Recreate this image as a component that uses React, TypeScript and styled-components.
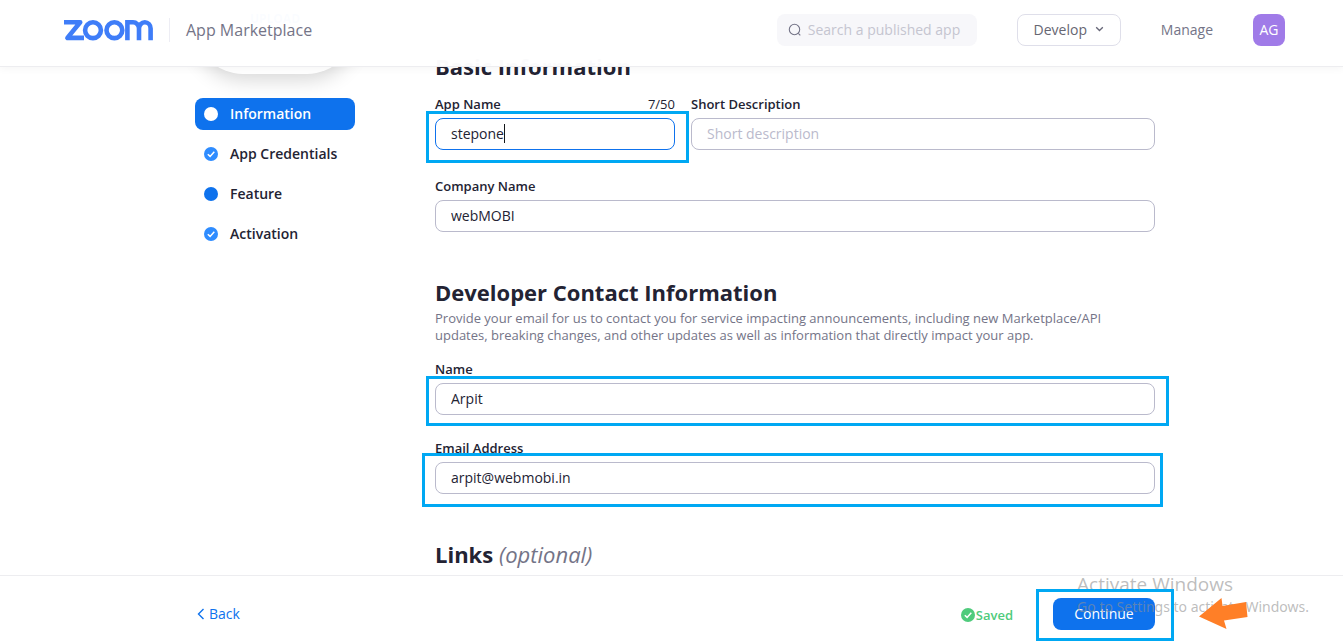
import React from "react";
import styled, { createGlobalStyle, css } from "styled-components";

const GlobalStyle = createGlobalStyle`
  *, *::before, *::after { box-sizing: border-box; }
  body {
    margin: 0;
    background: #fff;
    color: #232333;
    font-family: "Open Sans", "Noto Sans", sans-serif;
    font-size: 14px;
    line-height: 20px;
  }
  button, input { font: inherit; }
  h2, p { margin: 0; }
`;

const Shell = styled.div`
  display: flex;
  flex-direction: column;
  height: 100vh;
  overflow: hidden;
`;

const Header = styled.header`
  position: relative;
  z-index: 2;
  flex: none;
  display: flex;
  align-items: center;
  height: 67px;
  padding: 0 58px 7px 64px;
  background: rgba(255, 255, 255, 0.98);
  border-bottom: 1px solid #ededf0;
  box-shadow: 0 2px 8px rgba(0, 0, 0, 0.04);
`;

const Brand = styled.a`
  display: flex;
  align-items: center;
  gap: 16px;
  color: #747487;
  font-size: 16px;
  text-decoration: none;
`;

const BrandName = styled.span`
  padding: 2px 0 2px 16px;
  border-left: 1px solid #ededf4;
`;

const HeaderActions = styled.div`
  display: flex;
  align-items: center;
  gap: 40px;
  margin-left: auto;
`;

const SearchBox = styled.label`
  display: flex;
  align-items: center;
  gap: 5px;
  width: 200px;
  height: 32px;
  padding: 0 10px;
  border-radius: 8px;
  background: #f7f7fa;
`;

const SearchInput = styled.input`
  flex: 1;
  min-width: 0;
  padding: 0;
  border: 0;
  outline: 0;
  background: transparent;
  &::placeholder { color: #c5c5d0; opacity: 1; }
`;

const DevelopButton = styled.button`
  display: flex;
  align-items: center;
  justify-content: center;
  gap: 8px;
  width: 104px;
  height: 32px;
  padding: 0;
  border: 1px solid #dfdfea;
  border-radius: 8px;
  background: #fff;
  color: #666672;
`;

const HeaderLink = styled.a`
  color: #747487;
  text-decoration: none;
`;

const Avatar = styled.button`
  width: 32px;
  height: 32px;
  padding: 0;
  border: 0;
  border-radius: 8px;
  background: #a07be8;
  color: #fff;
`;

const Main = styled.main`
  flex: 1;
  min-height: 0;
  display: flex;
  gap: 80px;
  margin-top: -67px;
  padding: 0 188px 0 195px;
  overflow: hidden;
`;

const Sidebar = styled.aside`
  flex: none;
  width: 160px;
`;

const LogoCard = styled.div`
  height: 74px;
  padding-top: 8px;
  border-radius: 0 0 48px 48px;
  box-shadow: 0 6px 20px rgba(0, 0, 0, 0.16);
  text-align: center;
`;

const UploadButton = styled.button`
  padding: 0;
  border: 0;
  background: transparent;
  color: #0e72ed;
  font-size: 12px;
  font-weight: 700;
`;

const StepList = styled.nav`
  display: flex;
  flex-direction: column;
  gap: 8px;
  margin-top: 24px;
`;

const Step = styled.a<{ $active?: boolean }>`
  display: flex;
  align-items: center;
  gap: 12px;
  height: 32px;
  padding: 0 9px;
  border-radius: 8px;
  font-weight: 600;
  color: #232333;
  text-decoration: none;
  ${(p) =>
    p.$active &&
    css`
      background: #0e72ed;
      color: #fff;
    `}
`;

const Form = styled.form`
  flex: 1;
  min-width: 0;
  display: flex;
  flex-direction: column;
  gap: 45px;
  padding-top: 51px;
`;

const Section = styled.section`
  display: flex;
  flex-direction: column;
`;

const SectionTitle = styled.h2`
  font-size: 22px;
  line-height: 30px;
  font-weight: 700;
`;

const Optional = styled.em`
  font-weight: 400;
  color: #747487;
`;

const Intro = styled.p`
  margin-top: 3px;
  max-width: 700px;
  color: #747487;
  font-size: 13px;
  line-height: 17px;
`;

const Fields = styled.div<{ $top: number; $gap: number }>`
  display: grid;
  gap: ${(p) => p.$gap}px;
  margin-top: ${(p) => p.$top}px;
`;

const FieldRow = styled.div`
  display: grid;
  grid-template-columns: 240px 1fr;
  gap: 16px;
`;

const FieldBox = styled.div`
  position: relative;
  min-width: 0;
`;

const FieldHead = styled.div`
  display: flex;
  justify-content: space-between;
  margin-bottom: 4px;
  font-size: 13px;
`;

const FieldLabel = styled.label`
  font-weight: 600;
`;

const TextInput = styled.input<{ $focused?: boolean }>`
  display: block;
  width: 100%;
  height: 32px;
  padding: 0 15px 2px;
  border: 1px solid ${(p) => (p.$focused ? "#0e72ed" : "#babacc")};
  border-radius: 8px;
  outline: 0;
  background: #fff;
  color: #232333;
  &::placeholder { color: #babacc; opacity: 1; }
`;

const Caret = styled.span`
  position: absolute;
  left: 69px;
  bottom: 7px;
  width: 1px;
  height: 19px;
  background: #131619;
`;

const Highlight = styled.span<{ $inset: string }>`
  position: absolute;
  inset: ${(p) => p.$inset};
  border: 3px solid #00a8f3;
  pointer-events: none;
`;

const ContinueHighlight = styled(Highlight)`
  width: 138px;
`;

const Footer = styled.footer`
  position: relative;
  flex: none;
  display: flex;
  align-items: center;
  padding: 22px 188px 11px 195px;
  border-top: 1px solid #ededf0;
  background: #fff;
`;

const BackLink = styled.a`
  display: flex;
  align-items: center;
  gap: 2px;
  color: #0e72ed;
  text-decoration: none;
`;

const Saved = styled.span`
  display: flex;
  align-items: center;
  gap: 1px;
  margin: 2px 40px 0 auto;
  color: #4fcb7c;
  font-size: 13px;
  font-weight: 600;
`;

const ContinueButton = styled.button`
  width: 102px;
  height: 32px;
  padding: 0;
  border: 0;
  border-radius: 8px;
  background: #0e72ed;
  color: #fff;
`;

const Watermark = styled.div`
  position: absolute;
  top: -5px;
  right: 34px;
  color: rgba(145, 145, 145, 0.6);
  font-family: "Noto Sans", sans-serif;
  font-size: 14px;
  line-height: 20px;
  white-space: nowrap;
  pointer-events: none;
`;

const WatermarkTitle = styled.div`
  font-family: "Open Sans", sans-serif;
  font-size: 19px;
  line-height: 26px;
`;

const ArrowMark = styled.svg`
  position: absolute;
  top: 22px;
  right: 94px;
`;

const ZoomLogo = () => (
  <svg width="89" height="22" viewBox="0 -1 89 22" fill="none" stroke="#3f7df8" strokeWidth="4.6" role="img" aria-label="zoom">
    <path d="M0 2.3H16.2L3.4 17.9H20" strokeLinejoin="round" />
    <circle cx="29" cy="10.2" r="7.9" />
    <circle cx="50.4" cy="10.2" r="7.9" />
    <path d="M63.4 20.2V2.3H68.8A6 6 0 0 1 75 8.5V20.2M75 20.2V8.5A5.8 6.2 0 0 1 86.6 8.5V20.2" />
  </svg>
);

const SearchIcon = () => (
  <svg width="16" height="16" viewBox="0 0 16 16" fill="none" stroke="#747487" strokeWidth="1.1" aria-hidden="true">
    <circle cx="7.5" cy="7.5" r="5.2" />
    <path d="M11.3 11.3L13.3 13.3" />
  </svg>
);

const ChevronDown = () => (
  <svg width="9" height="7" viewBox="0 0 9 7" fill="none" stroke="#666677" strokeWidth="1.3" aria-hidden="true">
    <path d="M1.2 1.2L4.5 4.5L7.8 1.2" />
  </svg>
);

const ChevronLeft = () => (
  <svg width="12" height="12" viewBox="0 0 12 12" fill="none" stroke="#0e72ed" strokeWidth="1.4" aria-hidden="true">
    <path d="M8.5 1L3.5 6L8.5 11" />
  </svg>
);

const Dot = ({ color, check }: { color: string; check?: boolean }) => (
  <svg width="14" height="14" viewBox="0 0 14 14" aria-hidden="true">
    <circle cx="7" cy="7" r="7" fill={color} />
    {check && <path d="M3.8 7.2L6.1 9.4L10.3 4.8" fill="none" stroke="#fff" strokeWidth="1.5" />}
  </svg>
);

type FieldProps = {
  id: string;
  label: string;
  value?: string;
  placeholder?: string;
  counter?: string;
  focused?: boolean;
  highlight?: string;
};

const Field = ({ id, label, value, placeholder, counter, focused, highlight }: FieldProps) => (
  <FieldBox>
    <FieldHead>
      <FieldLabel htmlFor={id}>{label}</FieldLabel>
      {counter && <span>{counter}</span>}
    </FieldHead>
    <TextInput id={id} defaultValue={value} placeholder={placeholder} $focused={focused} />
    {focused && <Caret />}
    {highlight && <Highlight $inset={highlight} />}
  </FieldBox>
);

const steps = [
  { name: "Information", color: "#fff", active: true },
  { name: "App Credentials", color: "#2e8cff", check: true },
  { name: "Feature", color: "#0e72ed" },
  { name: "Activation", color: "#2e8cff", check: true },
];

export default function App() {
  return (
    <Shell>
      <GlobalStyle />
      <Header>
        <Brand href="#">
          <ZoomLogo />
          <BrandName>App Marketplace</BrandName>
        </Brand>
        <HeaderActions>
          <SearchBox>
            <SearchIcon />
            <SearchInput type="text" placeholder="Search a published app" aria-label="Search a published app" />
          </SearchBox>
          <DevelopButton type="button">
            Develop
            <ChevronDown />
          </DevelopButton>
          <HeaderLink href="#">Manage</HeaderLink>
          <Avatar type="button">AG</Avatar>
        </HeaderActions>
      </Header>

      <Main>
        <Sidebar>
          <LogoCard>
            <UploadButton type="button">UPLOAD</UploadButton>
          </LogoCard>
          <StepList>
            {steps.map((s) => (
              <Step key={s.name} href="#" $active={s.active}>
                <Dot color={s.color} check={s.check} />
                {s.name}
              </Step>
            ))}
          </StepList>
        </Sidebar>

        <Form id="app-info">
          <Section>
            <SectionTitle>Basic Information</SectionTitle>
            <Fields $top={13} $gap={26}>
              <FieldRow>
                <Field id="app-name" label="App Name" value="stepone" counter="7/50" focused highlight="17px -14px -13px -9px" />
                <Field id="short-desc" label="Short Description" placeholder="Short description" />
              </FieldRow>
              <Field id="company" label="Company Name" value="webMOBI" />
            </Fields>
          </Section>

          <Section>
            <SectionTitle>Developer Contact Information</SectionTitle>
            <Intro>
              Provide your email for us to contact you for service impacting announcements, including new Marketplace/API
              updates, breaking changes, and other updates as well as information that directly impact your app.
            </Intro>
            <Fields $top={15} $gap={23}>
              <Field id="dev-name" label="Name" value="Arpit" highlight="17px -14px -11px -9px" />
              <Field id="dev-email" label="Email Address" value="arpit@webmobi.in" highlight="15px -8px -13px -13px" />
            </Fields>
          </Section>

          <Section>
            <SectionTitle>
              Links <Optional>(optional)</Optional>
            </SectionTitle>
          </Section>
        </Form>
      </Main>

      <Footer>
        <BackLink href="#">
          <ChevronLeft />
          Back
        </BackLink>
        <Saved>
          <Dot color="#4fcb7c" check />
          Saved
        </Saved>
        <ContinueButton type="submit" form="app-info">
          Continue
        </ContinueButton>
        <Watermark>
          <WatermarkTitle>Activate Windows</WatermarkTitle>
          Go to Settings to activate Windows.
        </Watermark>
        <ContinueHighlight $inset="13px 169px 0 auto" />
        <ArrowMark width="50" height="32" viewBox="0 0 50 32" fill="#ff7f27" aria-hidden="true">
          <path d="M0 18.5L22.5 0L23.5 8L47 4L48.5 19L25 22.5L27.5 31Z" />
        </ArrowMark>
      </Footer>
    </Shell>
  );
}
